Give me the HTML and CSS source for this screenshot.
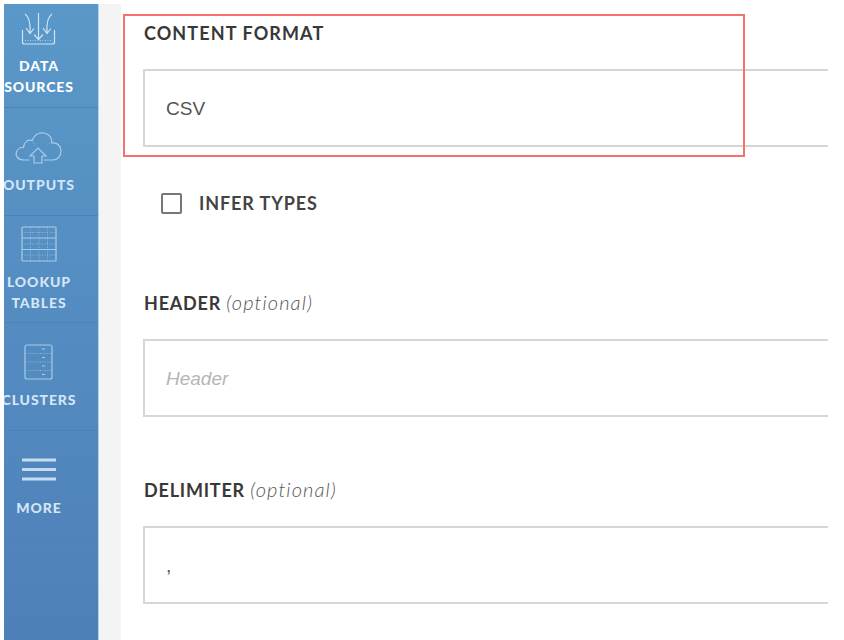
FILE: index.html
```html
<!DOCTYPE html>
<html lang="en">
<head>
  <meta charset="UTF-8">
  <title>Content format</title>
  <link rel="stylesheet" href="styles.css">
</head>
<body>
  <div class="page">
    <nav class="sidebar">
      <a class="nav-item active" href="#">
        <svg class="nav-icon" viewBox="0 -1 48 36">
          <path d="M7.500 20v12q0 2 2 2h28q2 0 2-2v-12"/>
          <path class="dots" d="M10 30.500h27"/>
          <path d="M23.500 3v26M19 24.500l4.500 5 4.500-5"/>
          <path d="M10 4q6 4 5 19M11 18l4 5.500 4-5"/>
          <path d="M37 4q-6 4-5 19M28 18l4 5.500 4-5"/>
        </svg>
        <span class="nav-label">DATA<br>SOURCES</span>
      </a>
      <a class="nav-item" href="#">
        <svg class="nav-icon" viewBox="0 -1 48 36">
          <path d="M15 32H9C3 32 0 28 1.500 24c1-3 4-5 7-4.500C9 14 13 11 17 12.500 19 7 24 4 29 5c5 1 8 5 8 10 5-1 9 3 9 8 0 5-3 9-8 9h-9"/>
          <path d="M19 35v-7h-4l8-8 8 8h-4v7z"/>
          <path class="dots" d="M17 13q2 2 3 5M37 15q-3 0-5 2"/>
        </svg>
        <span class="nav-label">OUTPUTS</span>
      </a>
      <a class="nav-item" href="#">
        <svg class="nav-icon" viewBox="0 -1 48 36">
          <rect x="7" y="2" width="34" height="34" rx="1"/>
          <path d="M7 13h34M7 24.500h34"/>
          <path class="dots" d="M15.500 2v34M24 2v34M32.500 2v34M7 7.500h34M7 19h34M7 30h34"/>
        </svg>
        <span class="nav-label">LOOKUP<br>TABLES</span>
      </a>
      <a class="nav-item" href="#">
        <svg class="nav-icon" viewBox="0 -1 48 36">
          <rect x="10" y="2" width="27" height="34" rx="2"/>
          <path class="dots" d="M10 10.500h27M10 19h27M10 27.500h27"/>
          <path class="mark" d="M27 6h3M27 14.500h3M27 23h3M27 31.500h3"/>
        </svg>
        <span class="nav-label">CLUSTERS</span>
      </a>
      <a class="nav-item" href="#">
        <svg class="nav-icon" viewBox="0 -1 48 36">
          <path class="bars" d="M7 9h34M7 18.500h34M7 28h34"/>
        </svg>
        <span class="nav-label">MORE</span>
      </a>
    </nav>
    <div class="gutter"></div>
    <main class="form">
      <div class="highlight"></div>
      <label class="field-label first">CONTENT FORMAT</label>
      <div class="input">CSV</div>
      <label class="check-row">
        <span class="checkbox"></span>
        <span class="check-text">INFER TYPES</span>
      </label>
      <label class="field-label header-label">HEADER <em>(optional)</em></label>
      <div class="input placeholder">Header</div>
      <label class="field-label delimiter-label">DELIMITER <em>(optional)</em></label>
      <div class="input">,</div>
    </main>
  </div>
</body>
</html>
```

FILE: styles.css
```css
html, body {
  margin: 0;
  height: 100%;
  background: #fff;
  overflow: hidden;
}
.page {
  display: flex;
  height: 640px;
  box-sizing: border-box;
  padding: 4px 0 0 4px;
  font-family: Lato, sans-serif;
  color: #333;
}
.sidebar {
  width: 94px;
  flex: none;
  overflow: hidden;
  background: linear-gradient(to bottom, #5a98c9, #4e80b8);
  border-right: 1px solid #b5d5ee;
}
.nav-item {
  display: flex;
  flex-direction: column;
  align-items: center;
  justify-content: center;
  gap: 11px;
  width: 118px;
  height: 107.500px;
  margin-left: -24px;
  box-sizing: border-box;
  border-bottom: 1px solid #4a83b4;
  color: #d3e6f5;
  text-decoration: none;
}
.nav-item.active {
  height: 108px;
  margin-top: -4px;
  padding-bottom: 2px;
  gap: 10px;
  color: #fff;
}
.nav-icon {
  width: 48px;
  height: 36px;
  flex: none;
  overflow: visible;
  fill: none;
  stroke: #a9cbe8;
  stroke-width: 1.200;
}
.nav-icon .dots {
  stroke-dasharray: 1 1.500;
  stroke-width: 1;
  opacity: 0.7;
}
.nav-icon .mark {
  stroke-width: 1.200;
}
.nav-icon .bars {
  stroke: #c4dcf1;
  stroke-width: 3;
}
.active .nav-icon {
  stroke: #cfe3f4;
}
.nav-label {
  font-size: 14px;
  font-weight: 900;
  line-height: 21px;
  letter-spacing: 0.9px;
  text-align: center;
  white-space: nowrap;
}
.gutter {
  width: 22px;
  flex: none;
  background: #f4f4f4;
}
.form {
  position: relative;
  flex: 1;
  padding: 0 16px 0 22px;
}
.highlight {
  position: absolute;
  left: 2px;
  top: 10px;
  width: 622px;
  height: 143px;
  border: 2px solid #f7716c;
  box-sizing: border-box;
}
.field-label {
  display: block;
  margin: 53px 0 24px 1px;
  font-size: 18px;
  line-height: 24px;
  font-weight: 700;
  letter-spacing: 0.8px;
  color: #383838;
}
.field-label.first {
  margin-top: 17px;
  letter-spacing: 1.100px;
}
.field-label.header-label {
  margin-top: 75px;
}
.field-label.delimiter-label {
  margin-top: 60px;
}
.field-label em {
  font-size: 20px;
  font-weight: 300;
  letter-spacing: 1.100px;
  color: #555;
}
.input {
  height: 78px;
  box-sizing: border-box;
  border: 2px solid #d6d6d6;
  border-right: none;
  padding: 0 21px;
  line-height: 76px;
  font-family: "Liberation Sans", sans-serif;
  font-size: 19px;
  color: #555;
}
.input.placeholder {
  font-style: italic;
  color: #b5b5b5;
}
.check-row {
  display: flex;
  align-items: center;
  gap: 17px;
  height: 24px;
  margin: 44px 0 0 18px;
}
.checkbox {
  width: 21px;
  height: 21px;
  box-sizing: border-box;
  border: 2px solid #777;
  border-radius: 2px;
}
.check-text {
  font-size: 18px;
  font-weight: 700;
  letter-spacing: 0.9px;
  color: #444;
}
```
